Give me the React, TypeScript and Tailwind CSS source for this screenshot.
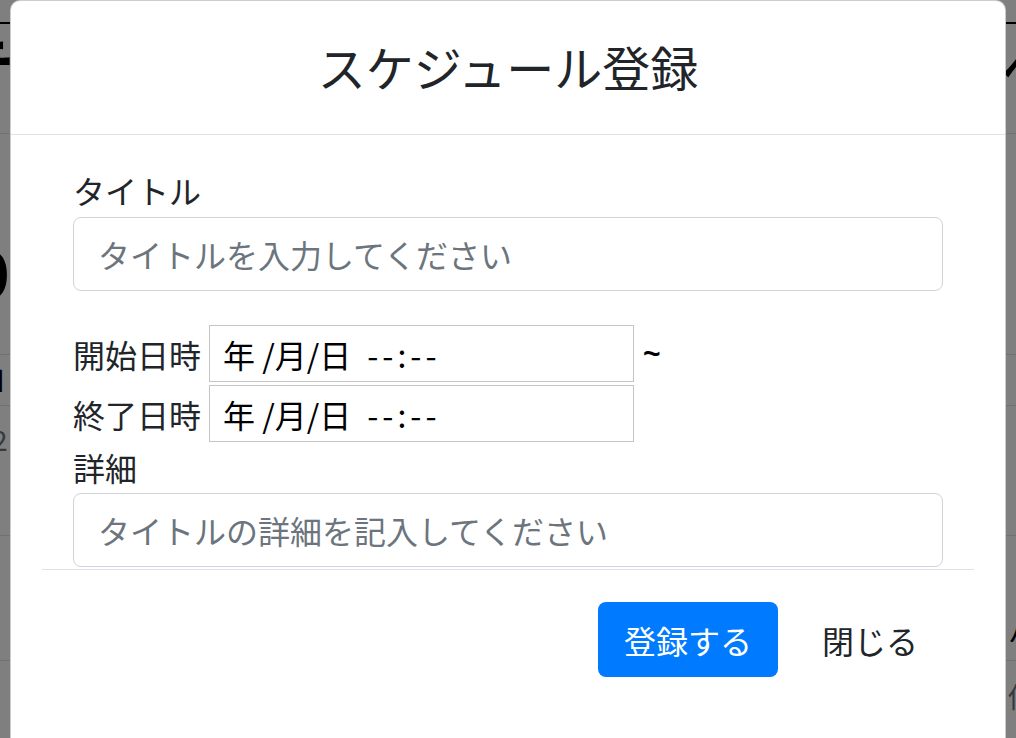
import React from "react";

function DateBox() {
  return (
    <div className="flex h-[57px] w-[425px] items-center border border-[#c4c4c4] pl-[13px] text-[32px] whitespace-pre text-black">
      <span>年 /月/日</span>
      <span className="ml-[16px] tracking-[4px]">--:--</span>
    </div>
  );
}

export default function App() {
  return (
    <div className="relative h-[738px] w-[1016px] overflow-hidden bg-white font-['Noto_Sans_CJK_JP','Noto_Sans',sans-serif] text-[#212529]">
      {/* underlying page */}
      <div className="flex flex-col">
        <div className="h-[24px] border-b-2 border-black" />
        <div className="flex h-[110px] items-start justify-between border-b border-[#dee2e6]">
          <span className="-ml-[46px] mt-[8px] text-[60px] leading-none font-bold text-black">テ</span>
          <span className="-mr-[44px] mt-[10px] text-[60px] leading-none text-black">ヘ</span>
        </div>
        <div className="flex h-[220px] flex-col pt-[58px]">
          <span className="-ml-[30px] text-[44px] leading-[48px] font-bold text-black">II</span>
          <span className="-ml-[28px] text-[64px] leading-[60px] font-bold text-black">0</span>
        </div>
        <div className="flex h-[52px] items-center border-y border-[#dee2e6]">
          <span className="-ml-[14px] text-[28px] font-bold text-black">d</span>
        </div>
        <div className="flex h-[130px] items-start border-b border-[#dee2e6] pt-[12px]">
          <span className="-ml-[8px] text-[28px] text-[#6c757d]">2</span>
        </div>
        <div className="flex h-[125px] items-end justify-end border-b border-[#dee2e6] pb-[8px]">
          <span className="-mr-[20px] text-[28px] text-black">ハ</span>
        </div>
        <div className="flex items-start justify-end pt-[14px]">
          <span className="-mr-[20px] text-[28px] text-[#6c757d]">値</span>
        </div>
      </div>

      {/* modal overlay */}
      <div className="absolute inset-0 bg-black/50 px-[10px]">
        <div className="flex h-[748px] w-full flex-col rounded-[10px] border border-black/20 bg-white">
          <div className="flex h-[134px] shrink-0 items-center justify-center border-b border-[#dee2e6]">
            <h5 className="-mt-[2px] text-[48px] leading-[1.2] font-normal">スケジュール登録</h5>
          </div>

          <div className="px-[31px]">
            <div className="border-b border-[#dee2e6] pb-[2px]">
              <div className="px-[31px] pt-[31px]">
                <div className="h-[48px] text-[32px] leading-[48px]">タイトル</div>
                <input
                  className="mt-[3px] block h-[74px] w-full rounded-[8px] border border-[#ced4da] bg-white px-[24px] text-[32px] text-[#495057] outline-none placeholder:text-[#6c757d]"
                  placeholder="タイトルを入力してください"
                />

                <div className="mt-[34px] flex h-[57px] items-center">
                  <span className="w-[136px] shrink-0 text-[32px] leading-[48px]">開始日時</span>
                  <DateBox />
                  <span className="ml-[9px] font-['Liberation_Sans',sans-serif] text-[30px] leading-none font-bold text-black">~</span>
                </div>
                <div className="mt-[3px] flex h-[57px] items-center">
                  <span className="w-[136px] shrink-0 text-[32px] leading-[48px]">終了日時</span>
                  <DateBox />
                </div>

                <div className="mt-[1px] h-[48px] text-[32px] leading-[48px]">詳細</div>
                <input
                  className="mt-[2px] block h-[74px] w-full rounded-[8px] border border-[#ced4da] bg-white px-[24px] text-[32px] text-[#495057] outline-none placeholder:text-[#6c757d]"
                  placeholder="タイトルの詳細を記入してください"
                />
              </div>
            </div>
          </div>

          <div className="flex justify-end gap-[19px] px-[62px] pt-[32px]">
            <button className="flex h-[75px] w-[180px] items-center justify-center rounded-[8px] bg-[#007bff] text-[32px] text-white">
              登録する
            </button>
            <button className="flex h-[75px] w-[146px] items-center justify-center rounded-[8px] text-[32px] text-[#212529]">
              閉じる
            </button>
          </div>
        </div>
      </div>
    </div>
  );
}
